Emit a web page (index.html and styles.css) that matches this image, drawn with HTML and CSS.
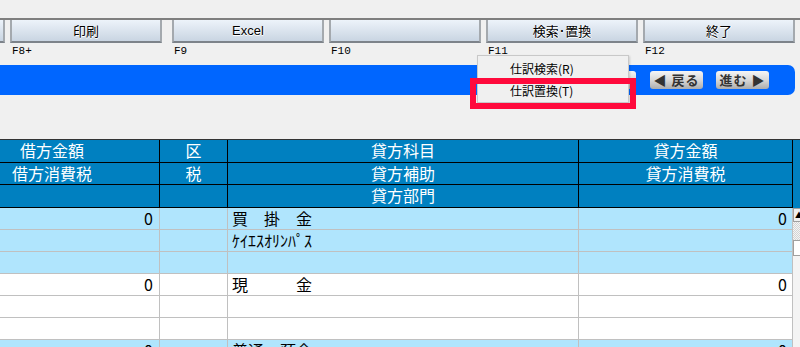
FILE: index.html
```html
<!DOCTYPE html>
<html lang="ja">
<head>
    <meta charset="UTF-8">
    <meta name="viewport" content="width=device-width, initial-scale=1.0">
    <title>仕訳入力</title>
    <link rel="stylesheet" href="styles.css">
</head>
<body>
    <div class="screen">
        <div class="top-rule"></div>

        <!-- Function keys -->
        <div class="fkeys">
            <div class="fkey"><div class="fbtn"></div><div class="flabel"></div></div>
            <div class="fkey group-end"><div class="fbtn">印刷</div><div class="flabel">F8+</div></div>
            <div class="fkey"><div class="fbtn latin">Excel</div><div class="flabel">F9</div></div>
            <div class="fkey"><div class="fbtn"></div><div class="flabel">F10</div></div>
            <div class="fkey"><div class="fbtn">検索･置換</div><div class="flabel">F11</div></div>
            <div class="fkey"><div class="fbtn">終了</div><div class="flabel">F12</div></div>
        </div>

        <!-- Navigation bar -->
        <div class="navbar">
            <button class="nav-btn under">次へ</button>
            <button class="nav-btn">◀ 戻る</button>
            <button class="nav-btn">進む ▶</button>
        </div>

        <!-- Popup menu -->
        <div class="menu">
            <div class="menu-item">仕訳検索(R)</div>
            <div class="menu-item">仕訳置換(T)</div>
        </div>
        <div class="highlight"></div>

        <!-- Journal sheet -->
        <div class="sheet">
            <div class="sheet-grid">
                <div class="hd first">借方金額</div>
                <div class="hd">区</div>
                <div class="hd">貸方科目</div>
                <div class="hd">貸方金額</div>

                <div class="hd first">借方消費税</div>
                <div class="hd">税</div>
                <div class="hd">貸方補助</div>
                <div class="hd">貸方消費税</div>

                <div class="hd first"></div>
                <div class="hd"></div>
                <div class="hd">貸方部門</div>
                <div class="hd"></div>

                <div class="c blue num">0</div>
                <div class="c blue"></div>
                <div class="c blue name">買　掛　金</div>
                <div class="c blue num last">0</div>

                <div class="c blue"></div>
                <div class="c blue"></div>
                <div class="c blue name">ｹｲｴｽｵﾘﾝﾊﾟｽ</div>
                <div class="c blue"></div>

                <div class="c blue"></div>
                <div class="c blue"></div>
                <div class="c blue"></div>
                <div class="c blue"></div>

                <div class="c num">0</div>
                <div class="c"></div>
                <div class="c name">現　　　金</div>
                <div class="c num last">0</div>

                <div class="c"></div>
                <div class="c"></div>
                <div class="c"></div>
                <div class="c"></div>

                <div class="c"></div>
                <div class="c"></div>
                <div class="c"></div>
                <div class="c"></div>

                <div class="c blue num">0</div>
                <div class="c blue"></div>
                <div class="c blue name">普通　預金</div>
                <div class="c blue num last">0</div>
            </div>
            <div class="scroll">
                <div class="scroll-head"></div>
                <div class="scroll-up">▲</div>
                <div class="scroll-track"></div>
                <div class="scroll-thumb"></div>
                <div class="scroll-rest"></div>
            </div>
        </div>
    </div>
</body>
</html>
```

FILE: styles.css
```css
/* General */
* {
    margin: 0;
    padding: 0;
    box-sizing: border-box;
}

body {
    width: 800px;
    height: 347px;
    overflow: hidden;
    background: #f0f0f0;
    font-family: "Noto Sans CJK JP", sans-serif;
}

.screen {
    position: relative;
    height: 347px;
    padding-top: 18px;
    overflow: hidden;
}

.top-rule {
    height: 2px;
    background: #7f7f7f;
}

/* Function keys */
.fkeys {
    display: flex;
    height: 45px;
    margin-left: -147px;
}

.fkey {
    width: 152px;
    margin-right: 5px;
    flex-shrink: 0;
}

.fkey.group-end {
    margin-right: 10px;
}

.fbtn {
    height: 23px;
    background: linear-gradient(#edf3fa, #c9d5e2);
    border-left: 2px solid #a4a9ae;
    border-right: 2px solid #a4a9ae;
    border-bottom: 2px solid #7d838a;
    text-align: center;
    font-size: 13px;
    line-height: 21px;
    color: #000;
    text-shadow: 1px 0 0 #fff, 0 1px 0 #fff;
}

.fbtn.latin {
    font-family: "Liberation Sans", sans-serif;
}

.flabel {
    height: 14px;
    font-family: "Liberation Mono", monospace;
    font-size: 11px;
    line-height: 12px;
    padding: 2px 0 0 2px;
    color: #000;
}

/* Navigation bar */
.navbar {
    width: 795px;
    height: 30px;
    background: #0066ff;
    border-radius: 0 7px 7px 0;
    display: flex;
    justify-content: flex-end;
    align-items: flex-start;
    gap: 13px;
    padding: 6px 26px 0 0;
}

.nav-btn {
    width: 53px;
    height: 18px;
    border: none;
    border-radius: 3px;
    background: linear-gradient(#f6f6f6, #d8d8d8 50%, #acacac);
    font-family: "Noto Sans CJK JP", sans-serif;
    font-size: 13px;
    font-weight: bold;
    line-height: 18px;
    color: #333;
    letter-spacing: 1px;
}

.nav-btn.under {
    margin-right: 1px;
}

/* Popup menu */
.menu {
    position: absolute;
    left: 477px;
    top: 55px;
    width: 152px;
    height: 48px;
    background: #f0f0f0;
    border: 1px solid #c8c8c8;
    padding-top: 2px;
    box-shadow: 1px 1px 2px rgba(0, 0, 0, 0.15);
}

.menu-item {
    height: 22px;
    line-height: 22px;
    padding-left: 32px;
    font-size: 12px;
    color: #000;
}

.highlight {
    position: absolute;
    left: 470px;
    top: 78px;
    width: 166px;
    height: 31px;
    border: 6px solid #ff0a3c;
}

/* Sheet */
.sheet {
    display: flex;
    margin-top: 44px;
    border-top: 1px solid #333;
}

.sheet-grid {
    display: grid;
    grid-template-columns: 160px 68px 351px 214px;
    grid-template-rows: 23px 22px 23px;
    grid-auto-rows: 22px;
}

.hd {
    background: #0080c0;
    color: #fff;
    border-right: 1px solid #000;
    border-bottom: 1px solid #000;
    font-size: 16px;
    line-height: 21px;
    text-align: center;
    white-space: nowrap;
}

.hd.first {
    padding-right: 55px;
}

.c {
    background: #fff;
    border-right: 1px solid #c0c0c0;
    border-bottom: 1px solid #c0c0c0;
    font-size: 16px;
    line-height: 21px;
    color: #000;
    white-space: nowrap;
}

.c.blue {
    background: #b0e5fd;
}

.c.num {
    text-align: right;
    padding-right: 6px;
}

.c.num.last {
    padding-right: 5px;
}

.c.name {
    padding-left: 4px;
}

/* Scrollbar stub */
.scroll {
    width: 7px;
    display: flex;
    flex-direction: column;
}

.scroll-head {
    height: 68px;
    background: #0080c0;
}

.scroll-up {
    height: 14px;
    background: #f0f0f0;
    border: 1px solid #a0a0a0;
    border-right: none;
    font-size: 8px;
    line-height: 12px;
    padding-left: 1px;
    overflow: hidden;
    color: #000;
}

.scroll-track {
    height: 18px;
    background: repeating-conic-gradient(#d4d4d4 0 25%, #f4f4f4 0 50%) 0 0 / 2px 2px;
}

.scroll-thumb {
    height: 16px;
    background: #fff;
    border: 1px solid #a0a0a0;
    border-right: none;
}

.scroll-rest {
    flex: 1;
    background: #f4f4f4;
}
```
